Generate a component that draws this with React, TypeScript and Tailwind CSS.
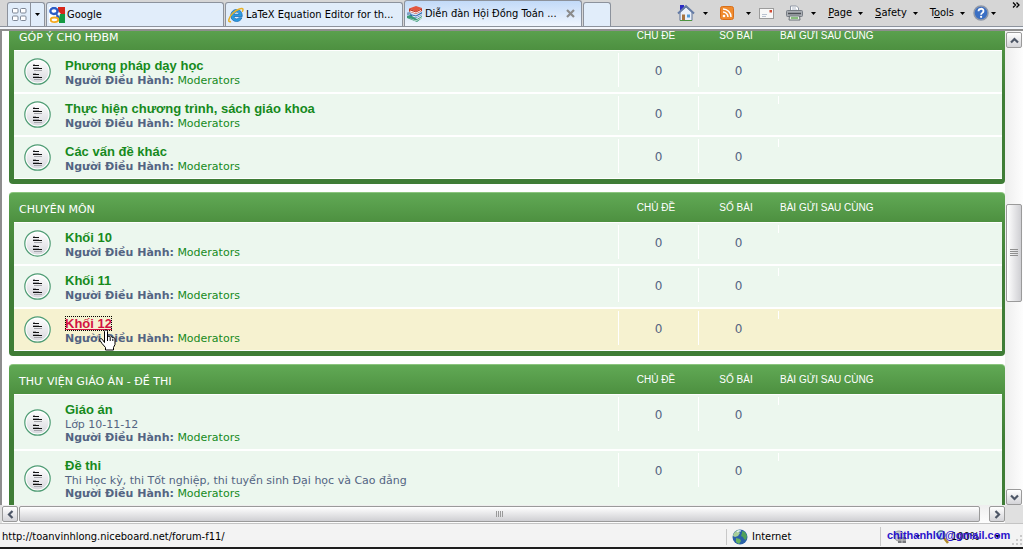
import type { ReactNode } from "react";

type Forum = {
  name: string;
  description?: string;
  topics: number;
  posts: number;
  active?: boolean;
};

type Category = {
  title: string;
  forums: Forum[];
};

const categories: Category[] = [
  {
    title: "GÓP Ý CHO HĐBM",
    forums: [
      { name: "Phương pháp dạy học", topics: 0, posts: 0 },
      { name: "Thực hiện chương trình, sách giáo khoa", topics: 0, posts: 0 },
      { name: "Các vấn đề khác", topics: 0, posts: 0 },
    ],
  },
  {
    title: "CHUYÊN MÔN",
    forums: [
      { name: "Khối 10", topics: 0, posts: 0 },
      { name: "Khối 11", topics: 0, posts: 0 },
      { name: "Khối 12", topics: 0, posts: 0, active: true },
    ],
  },
  {
    title: "THƯ VIỆN GIÁO ÁN - ĐỀ THI",
    forums: [
      { name: "Giáo án", description: "Lớp 10-11-12", topics: 0, posts: 0 },
      {
        name: "Đề thi",
        description: "Thi Học kỳ, thi Tốt nghiệp, thi tuyển sinh Đại học và Cao đẳng",
        topics: 0,
        posts: 0,
      },
    ],
  },
];

function GoogleIcon() {
  return (
    <svg width="16" height="16" viewBox="0 0 16 16" className="shrink-0">
      <rect width="16" height="16" fill="#fff" />
      <path d="M9 0h7v7h-4L9 4z" fill="#d8271c" />
      <path d="M11 7h5v9h-6V11z" fill="#149a43" />
      <ellipse cx="5" cy="4" rx="3.600" ry="3" fill="none" stroke="#2c5cc5" strokeWidth="2.400" />
      <path d="M6 6.500l3 1 1.500 2.500-1.500 2-2.500-1.500 1-1.500z" fill="#2c5cc5" />
      <ellipse cx="5.500" cy="12.800" rx="3.800" ry="2.300" fill="#fff" stroke="#f4a91f" strokeWidth="1.800" />
    </svg>
  );
}

function ExplorerIcon() {
  return (
    <svg width="16" height="16" viewBox="0 0 16 16" className="shrink-0">
      <path
        d="M14.200 9.500H6c.3 1.700 1.300 2.400 2.700 2.400 1 0 1.700-.4 2.100-1.100h3.100c-.8 2.300-2.800 3.700-5.300 3.700-3.400 0-5.800-2.400-5.800-5.900S5.200 2.500 8.600 2.500s5.800 2.500 5.600 7zM6 7.300h5c-.2-1.400-1.100-2.200-2.400-2.200S6.300 5.900 6 7.300z"
        fill="#2b9be0"
        stroke="#1a6fb8"
        strokeWidth=".8"
      />
      <path d="M3 14.500C-.5 16 .2 11 4.500 6.500S15 .2 15 2.500c0 .8-.3 1.600-.8 2.400" fill="none" stroke="#e8b22a" strokeWidth="1.500" />
    </svg>
  );
}

function BooksIcon() {
  return (
    <svg width="16" height="16" viewBox="0 0 16 16" className="shrink-0">
      <path d="M2 2.500L9 0l6 2-6 3.500z" fill="#e2563f" />
      <path d="M2 2.500v3l7 2.500 6-3V2L9 5.500z" fill="#c5361f" />
      <path d="M3 4.500l6 2 5-2.500v1L9 7.500l-6-2z" fill="#fff" />
      <path d="M3 8l6 1.500L15 6v3l-6 3-6-1.500z" fill="#2c67ad" />
      <path d="M5 9.500l4 1 6-3v1l-6 3-4-1z" fill="#f2f6fb" />
      <path d="M0 6.500l3-.5 1.500 2L0 9.500z" fill="#7f9fc5" />
      <path d="M0 10l3-1 7 4 5-3v2l-5 4-10-4z" fill="#3a9a78" />
      <path d="M1 11.500l8 3 6-3.500v1l-6 3.200z" fill="#dff2ea" />
    </svg>
  );
}

function HomeIcon() {
  return (
    <svg width="18" height="18" viewBox="0 0 18 18">
      <path d="M3 1h4v3L3 7z" fill="#2a2ac4" />
      <path d="M3 8v8.500h12V8L9 3z" fill="#e9f0fa" stroke="#5d7196" />
      <path d="M1 9.500L9 2l8 7.500" fill="none" stroke="#647ba5" strokeWidth="2" />
      <path d="M5 10.500h3V16H5z" fill="#a77441" />
      <path d="M10 10.500h3v3h-3z" fill="#4f9ad8" />
      <path d="M3 16.500h12" stroke="#4d9441" />
    </svg>
  );
}

function FeedIcon() {
  return (
    <svg width="14" height="14" viewBox="0 0 14 14">
      <rect x=".5" y=".5" width="13" height="13" rx="2" fill="#f08b2e" stroke="#d86f1a" />
      <circle cx="4" cy="10" r="1.300" fill="#fff" />
      <path d="M3 6a5 5 0 0 1 5 5M3 3a8 8 0 0 1 8 8" fill="none" stroke="#fff" strokeWidth="1.500" />
    </svg>
  );
}

function MailIcon() {
  return (
    <svg width="15" height="11" viewBox="0 0 15 11">
      <rect x=".5" y=".5" width="14" height="10" fill="#f8f8f8" stroke="#9c9c9c" />
      <path d="M3 6.500h5M3 8.500h4" stroke="#b9c2d0" />
      <rect x="10.500" y="2" width="2.500" height="2.500" fill="#d44a33" />
    </svg>
  );
}

function PrinterIcon() {
  return (
    <svg width="17" height="16" viewBox="0 0 17 16">
      <path d="M4.500 6V1h6l2 2v3" fill="#fff" stroke="#8f97a5" />
      <path d="M6 3h4M6 5h5" stroke="#b3bccb" />
      <rect x=".5" y="5.500" width="16" height="6" rx="1" fill="#a9adb3" stroke="#777c84" />
      <path d="M2 8.500h13" stroke="#4b4f55" strokeWidth="1.500" />
      <path d="M3.500 11h10l.5 4H3z" fill="#e9f3e6" stroke="#6b7078" />
      <path d="M5 13h7" stroke="#67ab58" strokeWidth="1.500" />
    </svg>
  );
}

function HelpIcon() {
  return (
    <svg width="16" height="16" viewBox="0 0 16 16">
      <circle cx="8" cy="8" r="7" fill="#3a6fc4" stroke="#8d97a8" strokeWidth="1.500" />
      <path d="M5.500 6.200C5.500 3 10.500 3 10.500 6c0 2-2.400 1.800-2.400 3.800" fill="none" stroke="#fff" strokeWidth="1.800" />
      <circle cx="8.100" cy="11.800" r="1.100" fill="#fff" />
    </svg>
  );
}

function GlobeIcon() {
  return (
    <svg width="16" height="16" viewBox="0 0 16 16">
      <circle cx="8" cy="8" r="7.500" fill="#2a62a8" />
      <path d="M3 3c2-2 4-2.500 5-2l-1 2 1 1-2 3-3 1-2-1c0-2 1-3 2-4z" fill="#a8cf9a" />
      <path d="M10 2l3 1 2 4-1 4-2-1-1-2-2-1 1-3z" fill="#4fa25a" />
      <path d="M4 9l4 1 1 2-2 3-3-2z" fill="#67b35f" />
      <path d="M5 3a4 3 0 0 1 4-1" stroke="#e3f1fb" strokeWidth="1.200" fill="none" />
    </svg>
  );
}

function TopicIcon() {
  return (
    <svg width="27" height="27" viewBox="0 0 27 27" className="block">
      <defs>
        <linearGradient id="topic" x1="0" y1="0" x2="0" y2="1">
          <stop offset="0" stopColor="#fdfdfd" />
          <stop offset="1" stopColor="#d9d9df" />
        </linearGradient>
      </defs>
      <circle cx="13.500" cy="13.500" r="12.700" fill="#fff" stroke="#4f9c74" strokeWidth="1.200" />
      <circle cx="13.500" cy="13.500" r="11" fill="url(#topic)" />
      <path d="M9 7.500h6M9 10.500h9M9 16.500h6M9 19.500h9" stroke="#111" />
      <path d="M9 6.500h2M9 9.500h6M10 12.500h8M9 15.500h3M9 18.500h6M10 21.500h8" stroke="#a4a4aa" />
    </svg>
  );
}

function HandCursor() {
  return (
    <svg width="17" height="22" viewBox="0 0 17 22" className="absolute top-5 left-[34px]">
      <path
        d="M5.500 13.500V2.500c0-2 3-2 3 0V8c.5-1.300 2.700-1 2.700.5.5-1.200 2.600-.9 2.600.6.7-.9 2.200-.4 2.200.9v5.500l-1.500 3V21h-8v-2.500L3 14.500 1 11.500c-.8-1.700 1-2.600 2.200-1.300z"
        fill="#fff"
        stroke="#000"
      />
      <path d="M8.500 8v4M11.200 9v3M13.800 10v2" stroke="#000" />
    </svg>
  );
}

function Caret({ className = "" }: { className?: string }) {
  return (
    <svg width="5" height="3" viewBox="0 0 5 3" className={className}>
      <path d="M0 0h5L2.500 3z" fill="#000" />
    </svg>
  );
}

function Tab({ icon, title, active = false }: { icon: ReactNode; title: string; active?: boolean }) {
  return (
    <div
      className={
        active
          ? "flex h-[26px] max-w-[178px] flex-1 items-center gap-[2px] rounded-t-[3px] border border-b-0 border-[#8c929c] bg-linear-to-b from-[#c2daf8] to-[#eff5fd] px-[2px]"
          : "flex h-6 max-w-[178px] flex-1 items-center gap-[2px] rounded-t-[3px] border border-b-0 border-[#8c929c] bg-[#e1edfa] px-[2px]"
      }
    >
      {icon}
      <a href="#" className="whitespace-nowrap">{title}</a>
      {active && (
        <button aria-label="Close tab" className="mr-1 ml-auto shrink-0">
          <svg width="9" height="9" viewBox="0 0 9 9" className="block">
            <path d="M1 1l7 7M8 1L1 8" stroke="#8b8b8b" strokeWidth="2.200" />
          </svg>
        </button>
      )}
    </div>
  );
}

function MenuButton({ hotkey, before = "", after }: { hotkey: string; before?: string; after: string }) {
  return (
    <button className="flex items-center gap-[6px]">
      <span>
        {before}
        <u>{hotkey}</u>
        {after}
      </span>
      <Caret />
    </button>
  );
}

function TabBar() {
  return (
    <div className="flex h-[27px] shrink-0 items-end border-b border-[#8c929c] bg-[#d6d6d6] pl-[7px]">
      <div className="mr-px flex h-6 w-[38px] rounded-t-[3px] border border-b-0 border-[#8c929c] bg-[#e1edfa]">
        <button aria-label="Quick tabs" className="flex w-[23px] items-center justify-center border-r border-[#8c929c]">
          <svg width="15" height="13" viewBox="0 0 15 13">
            <g fill="#fff" stroke="#7d8796">
              <rect x=".5" y=".5" width="5.500" height="4.500" rx="1" />
              <rect x="8.500" y=".5" width="5.500" height="4.500" rx="1" />
              <rect x=".5" y="8" width="5.500" height="4.500" rx="1" />
              <rect x="8.500" y="8" width="5.500" height="4.500" rx="1" />
            </g>
          </svg>
        </button>
        <button aria-label="Tab list" className="flex flex-1 items-center justify-center">
          <Caret />
        </button>
      </div>
      <div className="flex min-w-0 flex-1 items-end gap-px">
        <Tab icon={<GoogleIcon />} title="Google" />
        <Tab icon={<ExplorerIcon />} title="LaTeX Equation Editor for th..." />
        <Tab icon={<BooksIcon />} title="Diễn đàn Hội Đồng Toán ..." active />
        <button aria-label="New tab" className="h-6 w-7 rounded-t-[3px] border border-b-0 border-[#8c929c] bg-[#e1edfa]" />
      </div>
      <div className="flex h-[26px] shrink-0 items-center gap-2 pr-[3px]">
        <button aria-label="Home" className="flex items-center gap-2">
          <HomeIcon />
          <Caret />
        </button>
        <button aria-label="Feeds" className="ml-1 flex items-center gap-3">
          <FeedIcon />
          <Caret />
        </button>
        <button aria-label="Read mail">
          <MailIcon />
        </button>
        <button aria-label="Print" className="ml-1 flex items-center gap-2">
          <PrinterIcon />
          <Caret />
        </button>
        <div className="ml-1 flex gap-3">
          <MenuButton hotkey="P" after="age" />
          <MenuButton hotkey="S" after="afety" />
          <MenuButton before="T" hotkey="o" after="ols" />
        </div>
        <button aria-label="Help" className="flex items-center gap-[2px]">
          <HelpIcon />
          <Caret />
        </button>
        <button aria-label="More commands" className="ml-2 self-start pt-[2px]">
          <svg width="8" height="6" viewBox="0 0 8 6">
            <path d="M1 .5L3.500 3 1 5.500M4.500 .5L7 3 4.500 5.500" fill="none" stroke="#000" strokeWidth="1.300" />
          </svg>
        </button>
      </div>
    </div>
  );
}

function ForumRow({ forum }: { forum: Forum }) {
  const cell = "border-y border-white p-0 pt-[2px] align-top";
  const count = "flex h-[34px] items-center justify-center border-l border-white pt-[2px] text-[12px]";

  return (
    <tr className={forum.active ? "bg-[#f6f2d0]" : "bg-[#ecf7ee]"}>
      <td className="border-y border-white p-0 pl-[10px] align-middle">
        <TopicIcon />
      </td>
      <td className="relative border-y border-white p-0 pt-[7px] pb-[5px]">
        <h3 className="font-['Liberation_Sans',sans-serif] text-[13px] leading-4 font-bold">
          <a
            href="#"
            className={
              forum.active
                ? "text-[#d31141] underline outline outline-dotted -outline-offset-1 outline-black"
                : "text-[#168a1c]"
            }
          >
            {forum.name}
          </a>
        </h3>
        {forum.description && <p>{forum.description}</p>}
        <p>
          <strong>Người Điều Hành:</strong>{" "}
          <a href="#" className="text-[#168a1c]">Moderators</a>
        </p>
        {forum.active && <HandCursor />}
      </td>
      <td className={cell}>
        <div className={count}>{forum.topics}</div>
      </td>
      <td className={cell}>
        <div className={count}>{forum.posts}</div>
      </td>
      <td className={cell}>
        <div className="h-2 border-l border-white" />
      </td>
    </tr>
  );
}

function CategoryTable({ category }: { category: Category }) {
  return (
    <section className="mb-2 overflow-hidden rounded-[4px] border-t border-[#8cc57f] bg-[linear-gradient(#61a955_0px,#4d9040_29px,#3f7d36_75px)] pr-[3px] pb-[5px] pl-[5px]">
      <table className="w-full table-fixed border-separate border-spacing-0 text-left">
        <colgroup>
          <col className="w-[51px]" />
          <col />
          <col className="w-20" />
          <col className="w-20" />
          <col className="w-56" />
        </colgroup>
        <thead>
          <tr className="h-[29px] font-['Liberation_Sans',sans-serif] text-[10px] text-white">
            <th colSpan={2} className="p-0 pt-1 pl-[5px] font-['DejaVu_Sans',sans-serif] text-[11px] font-normal">
              {category.title}
            </th>
            <th className="p-0 pr-1 text-center font-normal">CHỦ ĐỀ</th>
            <th className="p-0 pr-1 text-center font-normal">SỐ BÀI</th>
            <th className="p-0 pl-[2px] font-normal">BÀI GỬI SAU CÙNG</th>
          </tr>
        </thead>
        <tbody>
          {category.forums.map((forum) => (
            <ForumRow key={forum.name} forum={forum} />
          ))}
        </tbody>
      </table>
    </section>
  );
}

function ScrollButton({ label, d }: { label: string; d: string }) {
  return (
    <button
      aria-label={label}
      className="flex size-4 shrink-0 items-center justify-center rounded-[2px] border border-[#9a9a9a] bg-linear-to-b from-white to-[#d4d4d8]"
    >
      <svg width="9" height="9" viewBox="0 0 9 9">
        <path d={d} fill="none" stroke="#4d5666" strokeWidth="2.200" />
      </svg>
    </button>
  );
}

function VerticalScrollbar() {
  return (
    <div className="flex w-[18px] shrink-0 flex-col items-center bg-linear-to-r from-[#eeeeee] to-[#fdfdfd] pt-px">
      <ScrollButton label="Scroll up" d="M1 6.500L4.500 3 8 6.500" />
      <div className="flex-[155]" />
      <div className="flex h-[98px] w-4 flex-col items-center justify-center gap-px rounded-[2px] border border-[#9a9a9a] bg-linear-to-r from-white to-[#cfcfd3]">
        {[0, 1, 2, 3].map((n) => (
          <div key={n} className="h-px w-2 border-b border-[#8f8f8f]" />
        ))}
      </div>
      <div className="flex-[186]" />
      <ScrollButton label="Scroll down" d="M1 2.500L4.500 6 8 2.500" />
    </div>
  );
}

function HorizontalScrollbar() {
  return (
    <div className="flex h-[18px] shrink-0 bg-[#e0e0e0] pr-[18px] pl-[2px]">
      <div className="flex flex-1 items-center gap-px bg-linear-to-b from-[#eeeeee] to-[#fdfdfd]">
        <ScrollButton label="Scroll left" d="M6.500 1L3 4.500 6.500 8" />
        <div className="mr-2 flex h-4 flex-1 items-center justify-center gap-px rounded-[2px] border border-[#9a9a9a] bg-linear-to-b from-white to-[#cfcfd3]">
          {[0, 1, 2, 3].map((n) => (
            <div key={n} className="h-[6px] w-px bg-[#9a9a9a]" />
          ))}
        </div>
        <ScrollButton label="Scroll right" d="M2.500 1L6 4.500 2.500 8" />
      </div>
    </div>
  );
}

function StatusBar() {
  return (
    <footer className="flex h-[26px] shrink-0 items-center border-t border-b-2 border-t-[#c4c4c4] border-b-[#1d1d1d] bg-[#f3f3f3] pt-[2px] pl-[2px]">
      <span className="flex-1">http://toanvinhlong.niceboard.net/forum-f11/</span>
      <div className="flex w-[154px] items-center gap-1 border-l border-[#c8c8c8] pl-[5px]">
        <GlobeIcon />
        Internet
      </div>
      <div className="relative flex w-[143px] items-center border-l border-[#c8c8c8] pl-3">
        <svg width="14" height="14" viewBox="0 0 14 14">
          <circle cx="6" cy="6" r="5" fill="#c6c9cf" stroke="#999" />
          <path d="M5 7h8v6H5z" fill="#77797d" />
          <path d="M5 10h8M9 7v6" stroke="#c9c9c9" />
        </svg>
        <Caret className="ml-2" />
        <svg width="13" height="14" viewBox="0 0 13 14" className="ml-4">
          <circle cx="5" cy="5" r="4" fill="#b9dcf3" stroke="#4a6f92" strokeWidth="1.500" />
          <path d="M8 8l4 5" stroke="#b08a2a" strokeWidth="2.500" />
        </svg>
        <button className="ml-[2px] flex items-center gap-4">
          100%
          <Caret />
        </button>
        <span className="absolute top-0 left-[6px] font-['Liberation_Sans',sans-serif] text-[11px] font-bold text-[#2b14cc]">
          chithanhlvl@gmail.com
        </span>
        <svg width="11" height="11" viewBox="0 0 11 11" className="mt-2 ml-auto">
          <path d="M8 0h2v2H8zM4 4h2v2H4zM8 4h2v2H8zM0 8h2v2H0zM4 8h2v2H4zM8 8h2v2H8z" fill="#c9c9c9" />
        </svg>
      </div>
    </footer>
  );
}

export default function App() {
  return (
    <div className="flex h-screen flex-col overflow-hidden bg-[#f4f7fc] font-['DejaVu_Sans_Condensed','DejaVu_Sans',sans-serif] text-[11px] leading-4 text-black">
      <TabBar />
      <div className="mt-[2px] flex min-h-0 flex-1 border-t-2 border-l-2 border-[#8e8e8e] bg-white">
        <main className="min-w-0 flex-1 overflow-hidden pl-[7px] font-['DejaVu_Sans',sans-serif] leading-[13px] text-[#536482]">
          <div className="-mt-[11px]">
            {categories.map((category) => (
              <CategoryTable key={category.title} category={category} />
            ))}
          </div>
        </main>
        <VerticalScrollbar />
      </div>
      <HorizontalScrollbar />
      <StatusBar />
    </div>
  );
}
